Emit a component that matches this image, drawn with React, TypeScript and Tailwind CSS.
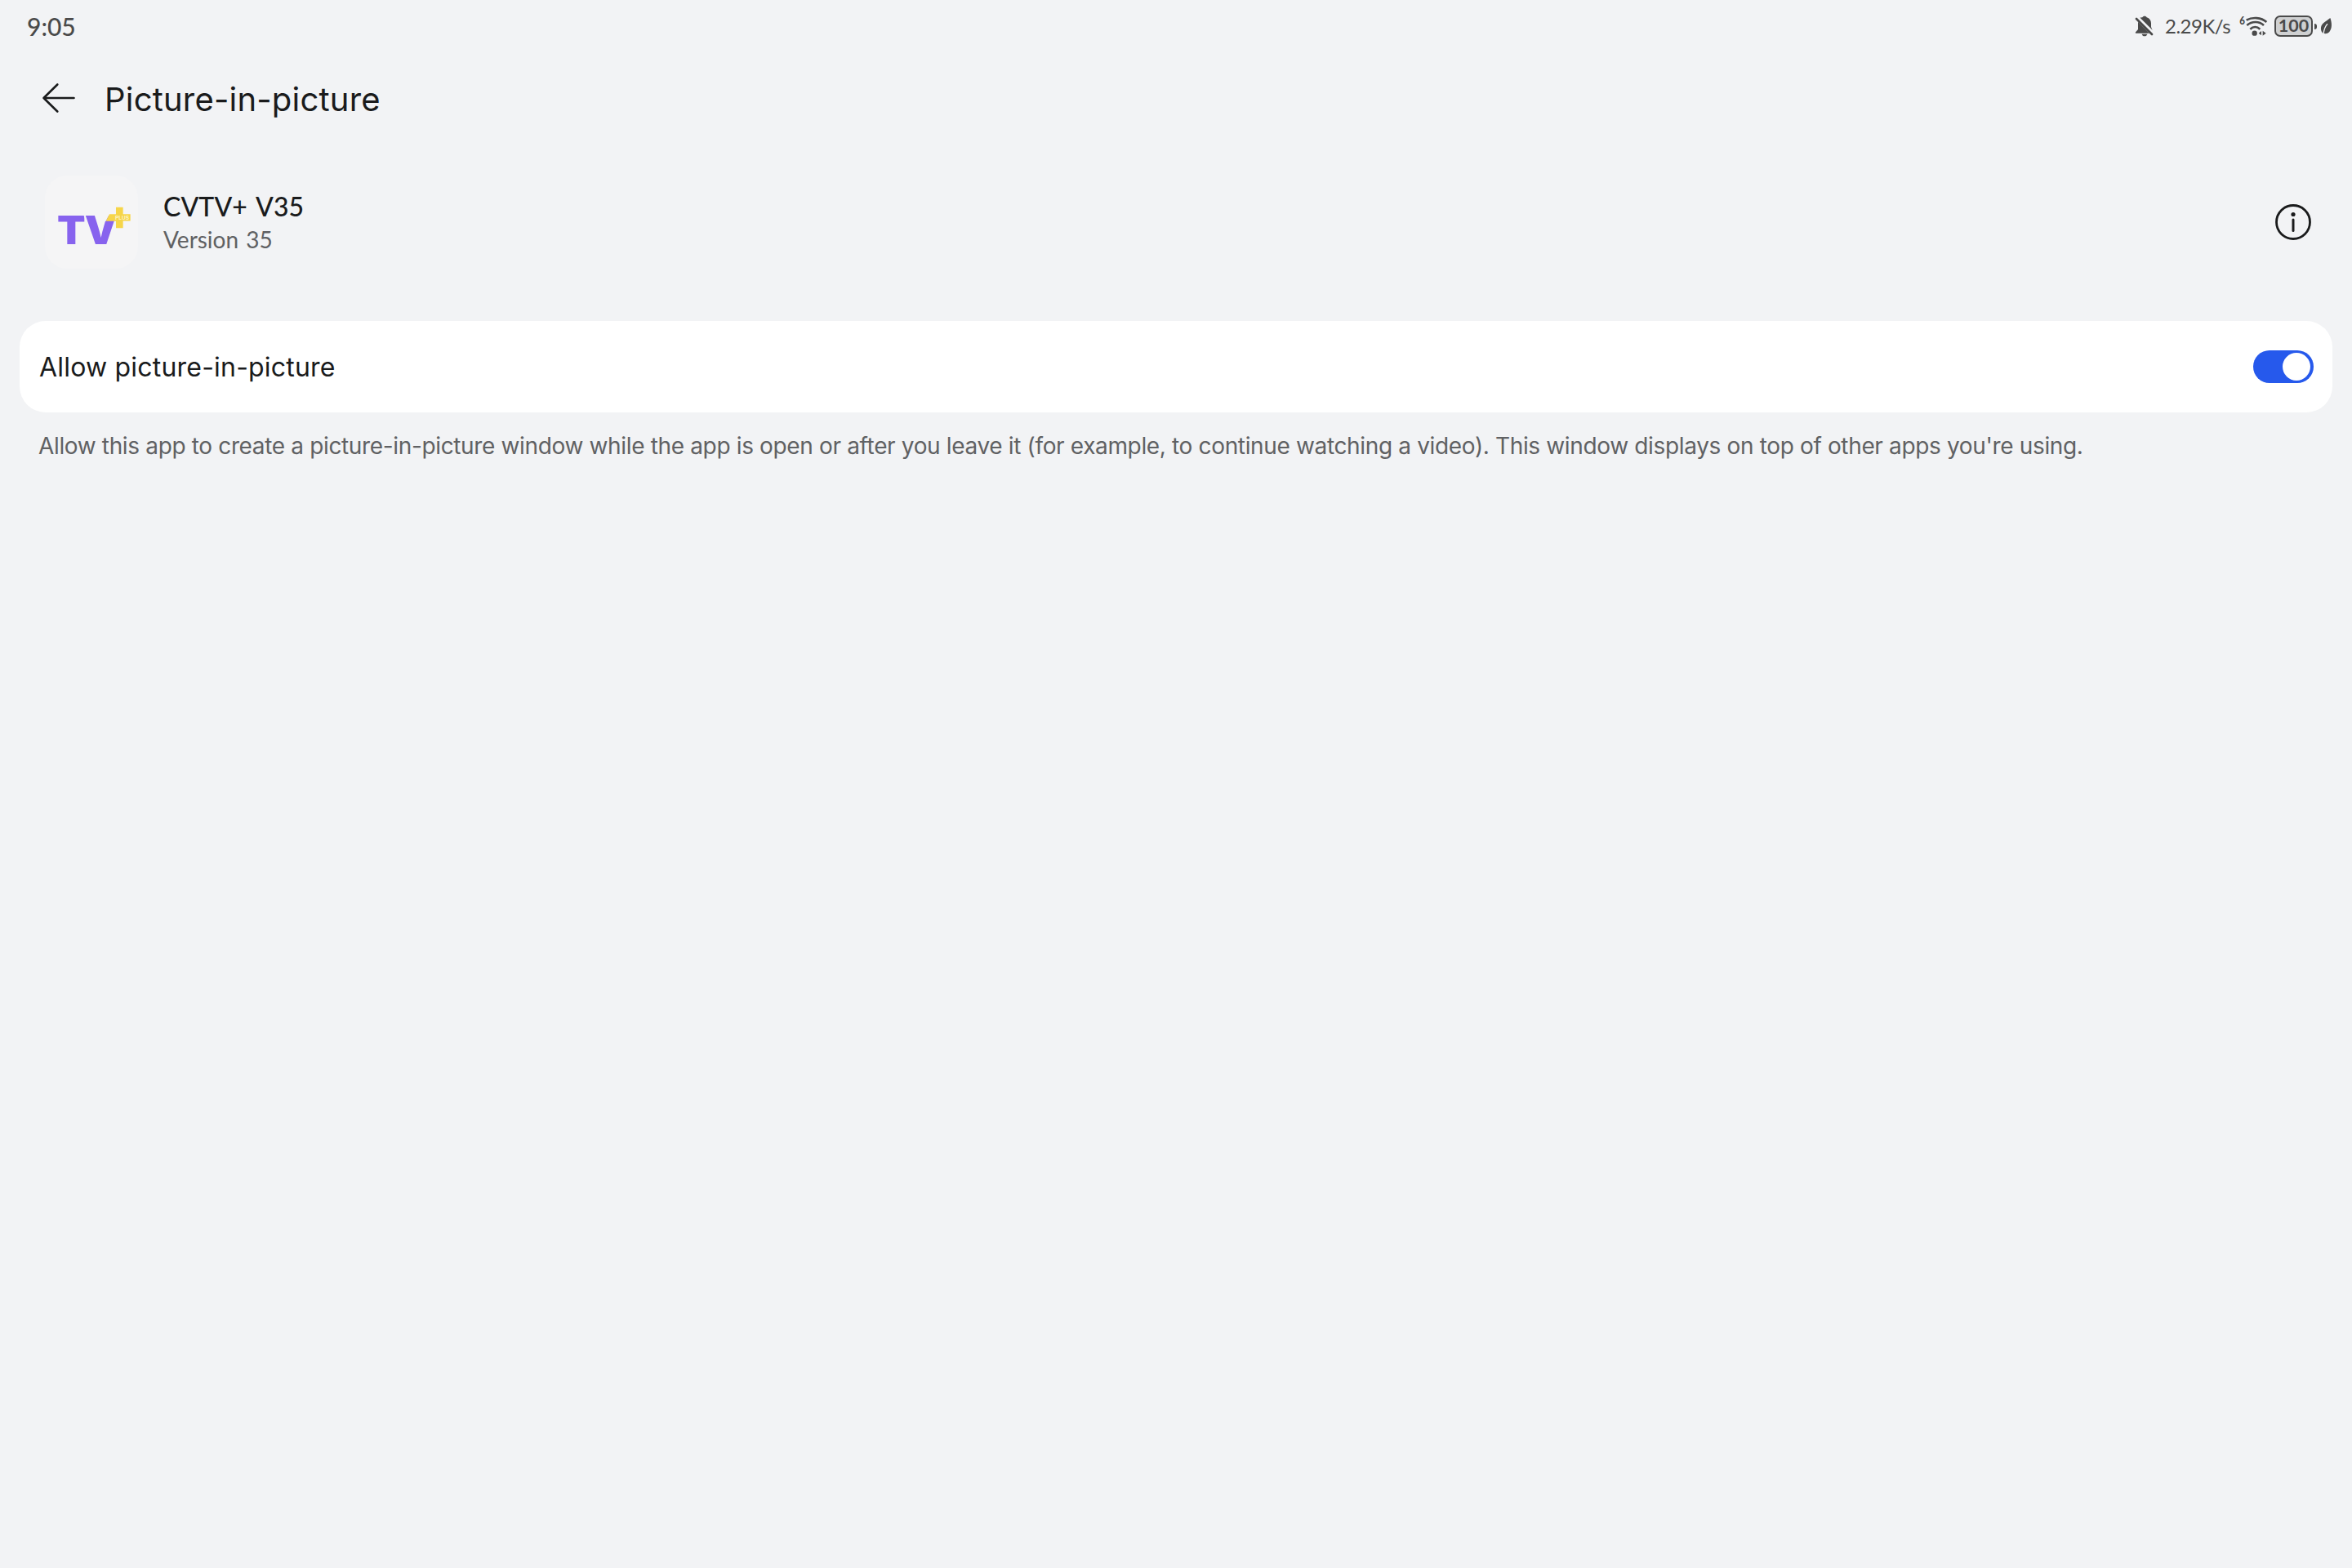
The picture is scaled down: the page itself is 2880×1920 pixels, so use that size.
import type { ReactNode } from "react";

function BellOffIcon() {
  return (
    <svg viewBox="42 27 69 78" className="h-[26px] w-[23px]" fill="#4a4a4a">
      <path d="M70 34c1-3 4-5 8-5s7 2 8 5c10 3 16 11 16 21v14l5 13-48-46c3-1 7-2 11-2Z" />
      <path d="M54 50l42 42H46c-2 0-2-3 0-5l8-9V50Z" />
      <path d="M68 95h20c-1 5-5 8-10 8s-9-3-10-8Z" />
      <path d="M52 30L112 90" stroke="#f2f3f5" strokeWidth="6" />
      <path d="M48 39L105 96" stroke="#4a4a4a" strokeWidth="8" strokeLinecap="round" />
    </svg>
  );
}

function WifiIcon() {
  return (
    <svg viewBox="36 0 108 132" className="h-11 w-9" fill="none" stroke="#4a4a4a">
      <text x="37" y="60" fontFamily="Lato" fontSize="42" fontWeight="900" fill="#4a4a4a" stroke="none" textLength="20" lengthAdjust="spacingAndGlyphs">
        6
      </text>
      <path d="M62 44c22-12 54-11 74 7" strokeWidth="8" />
      <path d="M64 63c18-16 45-16 62 0" strokeWidth="8" />
      <path d="M76 77c11-10 25-10 36 0" strokeWidth="8" />
      <g fill="#4a4a4a" stroke="none">
        <circle cx="92" cy="92" r="9.5" />
        <path d="M117 84v16l-10-8ZM122 83v18l12-9Z" />
      </g>
    </svg>
  );
}

function LeafIcon() {
  return (
    <svg viewBox="333 33 45 66" className="h-[22px] w-[15px]">
      <path d="M370 36c7 18 7 39-3 51-6 7-14 7-20 6-8-2-12-12-11-22 2-16 18-22 34-35Z" fill="#4a4a4a" />
      <path d="M360 58c-8 8-13 20-15 38" fill="none" stroke="#f2f3f5" strokeWidth="4" />
    </svg>
  );
}

function Battery({ level }: { level: number }) {
  return (
    <div className="flex items-center gap-[2px]">
      <div className="flex h-[26px] w-[47px] items-center justify-center rounded-[7px] border-2 border-[#4a4a4a] bg-[#cfd0d1] pb-px text-[21.5px] leading-none font-bold">
        {level}
      </div>
      <div className="h-[7px] w-[3px] rounded-r-sm bg-[#4a4a4a]" />
    </div>
  );
}

function StatusBar() {
  return (
    <div className="flex h-16 items-center justify-between pr-6 pl-[33px] text-[#4a4a4a]">
      <span className="text-[30px] leading-none font-medium">9:05</span>
      <div className="flex items-center">
        <BellOffIcon />
        <span className="ml-[14px] w-[91px] text-[24px] leading-none tracking-[-0.5px] whitespace-nowrap">2.29K/s</span>
        <WifiIcon />
        <div className="ml-[7px] flex items-center gap-1">
          <Battery level={100} />
          <LeafIcon />
        </div>
      </div>
    </div>
  );
}

function Header({ children }: { children: ReactNode }) {
  return (
    <header className="flex h-[113px] items-center pl-[51px]">
      <svg viewBox="0 0 42 38" className="mb-[2px] h-[38px] w-[42px]" fill="none" stroke="#1a1b1c" strokeWidth="2.6" strokeLinecap="round" strokeLinejoin="round">
        <path d="M19.3 2.5L2.5 19l16.8 16.5M2.5 19h37" />
      </svg>
      <h1 className="mt-[2px] ml-[35px] font-['Inter',sans-serif] text-[40px] leading-none font-normal tracking-[0.2px]">{children}</h1>
    </header>
  );
}

function AppLogo() {
  return (
    <div className="size-[114px] overflow-hidden rounded-[27px] bg-[#f5f5f6]">
      <svg viewBox="-15 -61.5 342 342" className="size-full" fontFamily="Inter" fontWeight="900">
        <g fill="#8763ee" fontSize="143">
          <text x="30" y="190" textLength="104" lengthAdjust="spacingAndGlyphs">T</text>
          <text x="131" y="190" textLength="118" lengthAdjust="spacingAndGlyphs">V</text>
        </g>
        <path d="M222 80L209 106h-10V80Z" fill="#f5f5f6" />
        <path d="M128 82l10 28" stroke="#f5f5f6" strokeWidth="3" />
        <path d="M222 80h24V55h26v25h27v25h-27v26h-26v-25h-37Z" fill="#f6d549" />
        <text x="243" y="99" fontSize="17" fontWeight="700" fill="#fdf3c4" textLength="51" lengthAdjust="spacingAndGlyphs">
          PLUS
        </text>
      </svg>
    </div>
  );
}

function InfoIcon() {
  return (
    <svg viewBox="0 0 44 44" className="size-11">
      <circle cx="22" cy="22" r="20.5" fill="none" stroke="#1a1b1c" strokeWidth="2.8" />
      <circle cx="22" cy="12.5" r="2.6" fill="#1a1b1c" />
      <path d="M22 19v13.5" stroke="#1a1b1c" strokeWidth="3" strokeLinecap="round" />
    </svg>
  );
}

function AppRow() {
  return (
    <section className="flex h-[189px] items-center pr-[50px] pl-[55px]">
      <AppLogo />
      <div className="mt-[3px] ml-[31px] flex-1">
        <p className="text-[32px] leading-[40px] font-medium tracking-[0.1px] [word-spacing:3px]">CVTV+ V35</p>
        <p className="text-[28px] leading-[41px] text-[#606163] [word-spacing:2px]">Version 35</p>
      </div>
      <InfoIcon />
    </section>
  );
}

function Toggle() {
  return (
    <div className="flex h-10 w-[74px] items-center justify-end rounded-full bg-[#2659ec] pr-1">
      <div className="size-[34px] rounded-full bg-white" />
    </div>
  );
}

export default function App() {
  return (
    <main className="h-[1920px] w-[2880px] overflow-hidden bg-[#f2f3f5] font-['Lato',sans-serif] text-[#1a1b1c]">
      <StatusBar />
      <Header>Picture-in-picture</Header>
      <AppRow />
      <section className="mx-6 mt-[27px] flex h-28 items-center justify-between rounded-[32px] bg-white pr-[23px] pl-6">
        <span className="mt-px font-['Inter',sans-serif] text-[32px] leading-none font-normal tracking-[0.2px]">Allow picture-in-picture</span>
        <Toggle />
      </section>
      <p className="mt-[21px] ml-[47px] font-['Inter',sans-serif] text-[28px] leading-10 tracking-[-0.35px] whitespace-nowrap text-[#606163]">
        Allow this app to create a picture-in-picture window while the app is open or after you leave it (for example, to
        continue watching a video). This window displays on top of other apps you're using.
      </p>
    </main>
  );
}
